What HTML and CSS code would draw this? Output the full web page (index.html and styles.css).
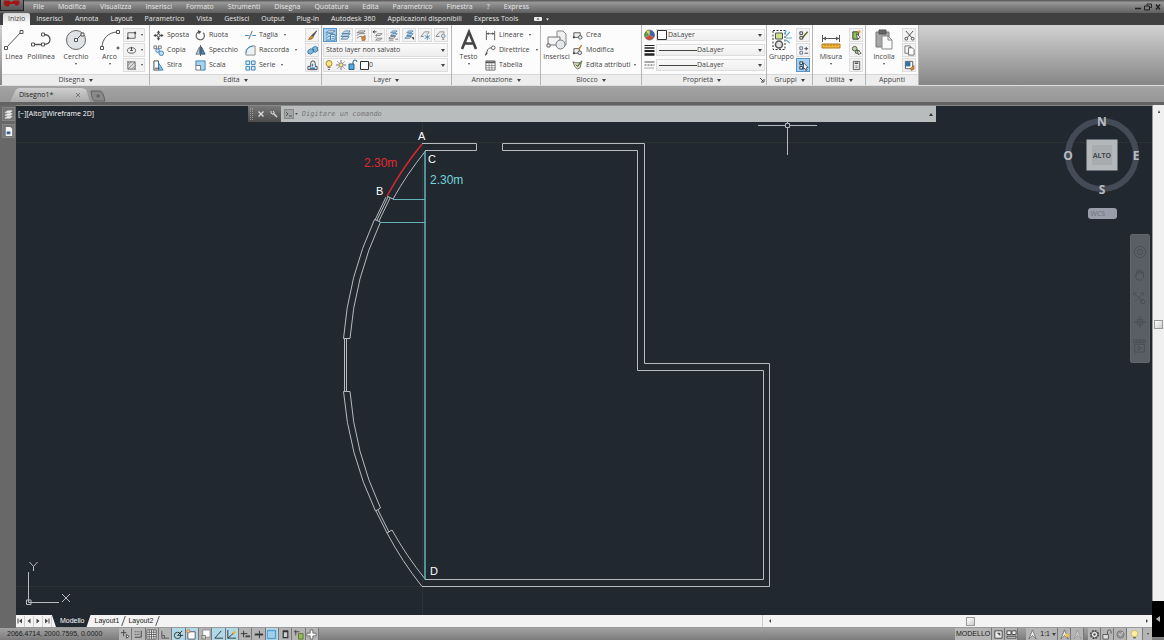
FILE: index.html
```
<!DOCTYPE html>
<html lang="it">
<head>
    <meta charset="UTF-8">
    <meta name="viewport" content="width=device-width, initial-scale=1.0">
    <title>Disegno1</title>
    <link rel="stylesheet" href="styles.css">
</head>
<body>

<header class="top">
    <button class="app-button" aria-label="Menu applicazione">
        <svg viewBox="0 0 24 10"><path d="M3 0h6l2 2 3-2h6v4q-1 2-4 2l-1-2h-5l-2 3q-4 0-5-3z" fill="#a01515"/></svg>
    </button>
    <nav class="menu-bar">
        <a href="#">File</a>
        <a href="#">Modifica</a>
        <a href="#">Visualizza</a>
        <a href="#">Inserisci</a>
        <a href="#">Formato</a>
        <a href="#">Strumenti</a>
        <a href="#">Disegna</a>
        <a href="#">Quotatura</a>
        <a href="#">Edita</a>
        <a href="#">Parametrico</a>
        <a href="#">Finestra</a>
        <a href="#">?</a>
        <a href="#">Express</a>
        <div class="window-buttons">
            <button aria-label="Riduci"><svg viewBox="0 0 8 8"><path d="M1 5.500h6" stroke="#222" stroke-width="1.500"/></svg></button>
            <button aria-label="Ripristina"><svg viewBox="0 0 8 8"><path d="M3 3V1h4.500v3.500H6M.5 3h5v4h-5z" fill="none" stroke="#222"/></svg></button>
            <button aria-label="Chiudi"><svg viewBox="0 0 8 8"><path d="M2 1.500l4 5M6 1.500l-4 5" stroke="#222" stroke-width="1.500"/></svg></button>
        </div>
    </nav>
    <nav class="ribbon-tabs">
        <a href="#" class="active">Inizio</a>
        <a href="#">Inserisci</a>
        <a href="#">Annota</a>
        <a href="#">Layout</a>
        <a href="#">Parametrico</a>
        <a href="#">Vista</a>
        <a href="#">Gestisci</a>
        <a href="#">Output</a>
        <a href="#">Plug-in</a>
        <a href="#">Autodesk 360</a>
        <a href="#">Applicazioni disponibili</a>
        <a href="#">Express Tools</a>
        <button class="ribbon-toggle" aria-label="Riduci barra">
            <svg viewBox="0 0 16 6"><rect x="0" y="1" width="8" height="4" rx="1" fill="#eee"/><path d="M2.500 3.500l1.500-1.500 1.500 1.500z" fill="#333"/><path d="M12 2.500h3l-1.500 2z" fill="#eee"/></svg>
        </button>
    </nav>
</header>

<section class="ribbon">
    <div class="panel">
        <div class="panel-body draw">
            <button class="big"><svg viewBox="0 0 24 24"><path d="M4 20L19 4" stroke="#555"/><path d="M2.500 18.500h3v3h-3zM18 2.500h3v3h-3z" fill="#fff" stroke="#555"/></svg><span>Linea</span></button>
            <button class="big"><svg viewBox="0 0 24 24"><path d="M4 16.500h10M14 6.500q7 0 7 5t-7 5" fill="none" stroke="#555" stroke-width="1.300"/><path d="M2.500 15h3v3h-3zM12.500 15h3v3h-3zM12.500 5h3v3h-3z" fill="#fff" stroke="#555"/></svg><span>Polilinea</span></button>
            <button class="big"><svg viewBox="0 0 24 24"><circle cx="12" cy="12" r="9.500" fill="#dfe3e6" stroke="#666"/><path d="M12 12l6-6" stroke="#555"/><path d="M10.500 10.500h3v3h-3zM17 5h3v3h-3z" fill="#fff" stroke="#555"/></svg><span>Cerchio</span><i class="caret small"></i></button>
            <button class="big"><svg viewBox="0 0 24 24"><path d="M4 20C4 11 10 4 20 4" fill="none" stroke="#555"/><path d="M2.500 18.500h3v3h-3zM18.500 2.500h3v3h-3z" fill="#fff" stroke="#555"/><path d="M18.500 20h3M20 18.500v3" stroke="#333"/></svg><span>Arco</span><i class="caret small"></i></button>
            <div class="stack">
                <button class="mini split" aria-label="Rettangolo"><svg viewBox="0 0 12 12"><path d="M2 3h8v6H2z" fill="#eee" stroke="#555"/><path d="M1 8h2v2H1zM9 2h2v2H9z" fill="#444"/></svg><i class="caret small"></i></button>
                <button class="mini split" aria-label="Ellisse"><svg viewBox="0 0 12 12"><ellipse cx="6" cy="6" rx="4.500" ry="3" fill="#eee" stroke="#555"/><path d="M4.500 6h3M6 2v4" stroke="#444"/></svg><i class="caret small"></i></button>
                <button class="mini split" aria-label="Tratteggio"><svg viewBox="0 0 12 12"><path d="M2 2h8v8H2z" fill="#ddd" stroke="#666"/><path d="M2 6l4-4M2 10l8-8M6 10l4-4M1 1l2 2M9 9l2 2" stroke="#777" stroke-width=".8"/></svg><i class="caret small"></i></button>
            </div>
        </div>
        <div class="panel-title">Disegna <i class="caret"></i></div>
    </div>

    <div class="panel">
        <div class="panel-body edit">
            <div class="stack">
                <button class="item"><svg viewBox="0 0 12 12"><path d="M6 1v10M1 6h10" stroke="#444"/><path d="M4 3l2-2.500L8 3zM4 9l2 2.500L8 9zM3 4L.5 6 3 8zM9 4l2.500 2L9 8z" fill="#444"/><path d="M4.500 4.500h3v3h-3z" fill="#fff" stroke="#555"/></svg>Sposta</button>
                <button class="item"><svg viewBox="0 0 12 12"><path d="M1 1h3v3H1zM6 1h3v3H6z" fill="#eee" stroke="#777"/><circle cx="5" cy="6" r="2" fill="#cde" stroke="#357fb5"/><circle cx="9" cy="9" r="2.500" fill="#bfe0f5" stroke="#357fb5"/></svg>Copia</button>
                <button class="item"><svg viewBox="0 0 12 12"><path d="M1 1h5v10H1z" fill="#fff" stroke="#444"/><path d="M6 3l5 8H6z" fill="#8fc4ea" stroke="#357fb5"/><path d="M2 9h5" stroke="#444"/></svg>Stira</button>
            </div>
            <div class="stack">
                <button class="item"><svg viewBox="0 0 12 12"><path d="M4 2a4.500 4.500 0 1 0 5 1" fill="none" stroke="#666" stroke-width="1.300"/><path d="M3 0l4 2-3 2.500z" fill="#444"/></svg>Ruota</button>
                <button class="item"><svg viewBox="0 0 12 12"><path d="M5 2v8H1z" fill="#b7c3cc" stroke="#678"/><path d="M7 2v8h4z" fill="#3f8fc9" stroke="#357"/><path d="M6 0v12" stroke="#555"/></svg>Specchio</button>
                <button class="item"><svg viewBox="0 0 12 12"><path d="M1 1h10v10H6V6H1z" fill="#a8d3f0" stroke="#357fb5"/><path d="M1 6h5v5H1z" fill="#fff" stroke="#777"/></svg>Scala</button>
            </div>
            <div class="stack">
                <button class="item"><svg viewBox="0 0 12 12"><path d="M0 6h4M8 6h4" stroke="#357fb5"/><path d="M4 10l4-9" stroke="#567"/><path d="M4 6h4" stroke="#999" stroke-dasharray="1 1"/></svg>Taglia <i class="caret small"></i></button>
                <button class="item"><svg viewBox="0 0 12 12"><path d="M1 11V9q0-7 8-8h2v10z" fill="#eef1f3" stroke="#888"/><path d="M1 9q0-7 8-8" fill="none" stroke="#357fb5"/></svg>Raccorda <i class="caret small"></i></button>
                <button class="item"><svg viewBox="0 0 12 12"><path d="M1 1h4v4H1zM7 1h4v4H7zM1 7h4v4H1zM7 7h4v4H7z" fill="#d8ecfa" stroke="#357fb5"/></svg>Serie <i class="caret small"></i></button>
            </div>
            <div class="stack">
                <button class="mini" aria-label="Cancella"><svg viewBox="0 0 12 12"><path d="M10.500 1L5 6l1.500 1.500z" fill="#555" stroke="#555"/><path d="M5 6l2 2-2 2-3.500.500L3 8z" fill="#c98b35" stroke="#a05a20" stroke-width=".6"/></svg></button>
                <button class="mini" aria-label="Esplodi"><svg viewBox="0 0 12 12"><path d="M1 6l3-2 3 1v3l-3 2-3-1zM6 3l3-1.500 2.500 1v4L9 8l-2-1z" fill="#7db7de" stroke="#25668f" stroke-width=".8"/></svg></button>
                <button class="mini" aria-label="Offset"><svg viewBox="0 0 12 12"><path d="M1 10.500V7h3V4q0-3 2.500-3T9 4v3h2v3.500z" fill="#eef5fa" stroke="#444"/><path d="M3 9h6M6 4v3" stroke="#357fb5" stroke-width="1.500"/></svg></button>
            </div>
        </div>
        <div class="panel-title">Edita <i class="caret"></i></div>
    </div>

    <div class="panel">
        <div class="panel-body layer">
            <div class="layer-tools">
                <button class="mini on" aria-label="Proprietà layer"><svg viewBox="0 0 12 12"><path d="M1 3l3-2h7L8 3zM1 6l3-2h5M1 9l3-2h3M1 11h4" fill="#fff" stroke="#3b6f96" stroke-width=".8"/><path d="M6 5h5v6H6z" fill="#fff" stroke="#357fb5"/><path d="M7 7h3M7 9h3" stroke="#357fb5"/></svg></button>
                <button class="mini" aria-label="Rendi corrente"><svg viewBox="0 0 12 12"><path d="M1 10l3-3h6L8 10zM1 7l3-3h7L8 7zM2 4l3-3h6L9 4z" fill="#bfe0f5" stroke="#46718f" stroke-width=".8"/></svg></button>
                <button class="mini" aria-label="Associa"><svg viewBox="0 0 12 12"><path d="M1 3l3-2h6L8 3zM1 6l3-2h6M1 9l3-2h3" fill="#eee" stroke="#666" stroke-width=".8"/><path d="M6 8l4-2v5l-3 1z" fill="#d38a3a" stroke="#8a4f1a" stroke-width=".6"/></svg></button>
                <button class="mini" aria-label="Precedente"><svg viewBox="0 0 12 12"><path d="M1 2h4M3 .5L1 2l2 1.500" fill="none" stroke="#444"/><path d="M4 6l2-2h5L9 6zM4 8.500l1-1.500M4 11l2-2h5L9 11z" fill="#eee" stroke="#666" stroke-width=".8"/></svg></button>
                <button class="mini" aria-label="Isola"><svg viewBox="0 0 12 12"><path d="M3 3l2-2h5L8 3zM3 6l2-2h5L8 6z" fill="#bfe0f5" stroke="#3b6f96" stroke-width=".8"/><path d="M1 9l2-2h5L6 9zM1 11h5M8 10h3" stroke="#555" stroke-width=".8" fill="#eee"/></svg></button>
                <button class="mini" aria-label="Annulla isola"><svg viewBox="0 0 12 12"><path d="M3 3l2-2h5L8 3zM3 6l2-2h5L8 6zM1 9l2-2h5L6 9z" fill="#bfe0f5" stroke="#3b6f96" stroke-width=".8"/><path d="M8 8l3 3V8z" fill="#333"/></svg></button>
                <button class="mini" aria-label="Congela"><svg viewBox="0 0 12 12"><path d="M1 7l4-5h5L9 4" fill="#eee" stroke="#777" stroke-width=".8"/><path d="M1 7h3" stroke="#777"/><path d="M8 4v7M5 6l6 3.500M11 6L5 9.500" stroke="#357fb5" stroke-width=".8"/></svg></button>
                <button class="mini" aria-label="Disattiva"><svg viewBox="0 0 12 12"><path d="M1 7l4-5h5L9 4" fill="#eee" stroke="#777" stroke-width=".8"/><path d="M1 7h4" stroke="#777"/><circle cx="9" cy="6.500" r="2" fill="#d5e5f0" stroke="#678" stroke-width=".8"/><path d="M8 10h2" stroke="#555"/></svg></button>
            </div>
            <div class="combo">
                <select aria-label="Stato layer"><option>Stato layer non salvato</option></select><i class="caret"></i>
            </div>
            <div class="combo">
                <svg class="layer-state" viewBox="0 0 46 12">
                    <circle cx="6" cy="4.500" r="3" fill="#fbe58b" stroke="#a58a2c"/><path d="M4.500 8.500h3M5 10.500h2" stroke="#777"/>
                    <circle cx="18" cy="6" r="2.200" fill="#fbe58b" stroke="#777"/><path d="M18 1v2M18 9v2M13 6h2M21 6h2M14.500 2.500l1 1M20.500 8.500l1 1M21.500 2.500l-1 1M15.500 8.500l-1 1" stroke="#777"/>
                    <path d="M26 5h5v5.500h-5z" fill="#5aa9dc" stroke="#25668f"/><path d="M30 5V3q0-2 2-2t2 2" fill="none" stroke="#25668f"/>
                    <path d="M37.500 2.500h8v8h-8z" fill="#fff" stroke="#333"/>
                </svg>
                <select aria-label="Layer corrente"><option>0</option></select><i class="caret"></i>
            </div>
        </div>
        <div class="panel-title">Layer <i class="caret"></i></div>
    </div>

    <div class="panel">
        <div class="panel-body annotation">
            <button class="big"><svg viewBox="0 0 24 24"><path d="M5 21L12 4l7 17M7.500 15.500h9" fill="none" stroke="#444" stroke-width="2.600"/></svg><span>Testo</span><i class="caret small"></i></button>
            <div class="stack">
                <button class="item"><svg viewBox="0 0 12 12"><path d="M1.500 1v10M10.500 1v10M2 4h8" stroke="#555"/><path d="M2 4l2-1.500v3zM10 4L8 2.500v3z" fill="#555"/></svg>Lineare <i class="caret small"></i></button>
                <button class="item"><svg viewBox="0 0 12 12"><path d="M1 11l2-6q1-2 4-2" fill="none" stroke="#555"/><circle cx="9" cy="3" r="2" fill="#fff" stroke="#555"/><path d="M0 12l1-4 2 1z" fill="#444"/></svg>Direttrice <i class="caret small"></i></button>
                <button class="item"><svg viewBox="0 0 12 12"><path d="M1 1h10v10H1z" fill="#fff" stroke="#666"/><path d="M1 2.500h10" stroke="#555" stroke-width="2"/><path d="M1 6h10M1 8.500h10M4.500 2v9M7.500 2v9" stroke="#777" stroke-width=".8"/></svg>Tabella</button>
            </div>
        </div>
        <div class="panel-title">Annotazione <i class="caret"></i></div>
    </div>

    <div class="panel">
        <div class="panel-body block">
            <button class="big"><svg viewBox="0 0 24 24"><path d="M12 3h6l3 3v11h-9z" fill="#f0f0f0" stroke="#888"/><path d="M3 9h12v8H3z" fill="#f3f3f3" stroke="#777"/><circle cx="15.500" cy="16.500" r="4.500" fill="#e4e8ec" stroke="#777"/><path d="M2 16h3v3H2z" fill="#fff" stroke="#666"/></svg><span>Inserisci</span></button>
            <div class="stack">
                <button class="item"><svg viewBox="0 0 12 12"><path d="M2 3h7v5H2z" fill="#eee" stroke="#555"/><circle cx="9" cy="8" r="2" fill="#dde6ee" stroke="#555"/><path d="M1 7h2v2H1z" fill="#444"/></svg>Crea</button>
                <button class="item"><svg viewBox="0 0 12 12"><path d="M2 4h6v5H2z" fill="#eee" stroke="#555"/><circle cx="8.500" cy="8.500" r="2" fill="#dde6ee" stroke="#555"/><path d="M10.500 0L7 4l1 1z" fill="#e0a030" stroke="#c07a20"/><path d="M1 8h2v2H1z" fill="#444"/></svg>Modifica</button>
                <button class="item"><svg viewBox="0 0 12 12"><path d="M1 2l3 1h6l-1 5-3 2-3-3z" fill="#e8e0c0" stroke="#666"/><path d="M11 1L6 7" stroke="#4c7d3c" stroke-width="1.500"/><path d="M4 5l2 2" stroke="#444"/></svg>Edita attributi <i class="caret small"></i></button>
            </div>
        </div>
        <div class="panel-title">Blocco <i class="caret"></i></div>
    </div>

    <div class="panel">
        <div class="panel-body properties">
            <div class="property">
                <svg viewBox="0 0 12 12"><path d="M6 6V1a5 5 0 0 1 4.300 7.500z" fill="#3d62b5"/><path d="M6 6l4.300 2.500a5 5 0 0 1-8.600 0z" fill="#d04a38"/><path d="M6 6L1.700 8.500A5 5 0 0 1 6 1z" fill="#5da045"/><path d="M6 6L2.500 2.500A5 5 0 0 1 6 1z" fill="#e7d44a"/><circle cx="6" cy="6" r="5" fill="none" stroke="#555" stroke-width=".6"/></svg>
                <div class="combo"><svg class="swatch" viewBox="0 0 10 10"><path d="M.5.5h9v9h-9z" fill="#fff" stroke="#333"/></svg><select aria-label="Colore"><option>DaLayer</option></select><i class="caret"></i></div>
            </div>
            <div class="property">
                <svg viewBox="0 0 12 12"><path d="M1 1.500h10" stroke="#222"/><path d="M1 4h10" stroke="#222" stroke-width="1.500"/><path d="M1 7h10" stroke="#222" stroke-width="2"/><path d="M1 10.500h10" stroke="#222" stroke-width="2.500"/></svg>
                <div class="combo"><span class="line"></span><select aria-label="Spessore linea"><option>DaLayer</option></select><i class="caret"></i></div>
            </div>
            <div class="property">
                <svg viewBox="0 0 12 12"><path d="M1 3h10" stroke="#555"/><path d="M1 6h10" stroke="#555" stroke-dasharray="2 1"/><path d="M1 9h10" stroke="#555" stroke-dasharray="1 1"/></svg>
                <div class="combo"><span class="line"></span><select aria-label="Tipo di linea"><option>DaLayer</option></select><i class="caret"></i></div>
            </div>
        </div>
        <div class="panel-title with-launcher">Proprietà <i class="caret"></i><svg class="launcher" viewBox="0 0 6 6"><path d="M1 1l3 3M5 2v3H2" fill="none" stroke="#444"/></svg></div>
    </div>

    <div class="panel">
        <div class="panel-body group">
            <button class="big"><svg viewBox="0 0 24 24"><path d="M3 2.500h12v19H3z" fill="none" stroke="#333" stroke-dasharray="2 1.500"/><path d="M5.500 5h7v6h-7z" fill="#cfe38c" stroke="#555"/><circle cx="9" cy="16.500" r="3.500" fill="#dfe3e6" stroke="#555" stroke-width="1.500"/><path d="M16 8l4-4M16 10h6M16 12l4 3M15 6l1-4" stroke="#5aa9dc" stroke-width="1.200"/></svg><span>Gruppo</span></button>
            <div class="stack">
                <button class="mini" aria-label="Separa"><svg viewBox="0 0 12 12"><path d="M2 2h3v3H2zM2 7h3v3H2z" fill="#ddd" stroke="#444"/><path d="M10.500 2L6 7l-1 2" stroke="#586b22" stroke-width="1.500"/></svg></button>
                <button class="mini" aria-label="Modifica gruppo"><svg viewBox="0 0 12 12"><path d="M2 2h3v3H2zM2 7h3v3H2z" fill="#d8ecfa" stroke="#678"/><path d="M7 4h4M9 2v4M7 9h4" stroke="#444"/></svg></button>
                <button class="mini on" aria-label="Selezione gruppo"><svg viewBox="0 0 12 12"><path d="M2 2h3v3H2zM2 7h3v3H2z" fill="#d8ecfa" stroke="#234"/><path d="M6 3l5 5-2 .5 1 2.500-1.500.5-1-2.500L6 10z" fill="#fff" stroke="#234" stroke-width=".8"/></svg></button>
            </div>
        </div>
        <div class="panel-title">Gruppi <i class="caret"></i></div>
    </div>

    <div class="panel">
        <div class="panel-body utility">
            <button class="big"><svg viewBox="0 0 24 24"><path d="M3.500 7v7M20.500 7v7M4 10.500h16" stroke="#555"/><path d="M4 10.500l3-2v4zM20 10.500l-3-2v4z" fill="#555"/><path d="M3 16h18v4H3z" fill="#edb63f" stroke="#b07d1c"/><path d="M6 16v2M9 16v2M12 16v2M15 16v2M18 16v2" stroke="#b07d1c"/></svg><span>Misura</span><i class="caret small"></i></button>
            <div class="stack">
                <button class="mini" aria-label="Selezione rapida"><svg viewBox="0 0 12 12"><path d="M2 2h6v8H2z" fill="#8fc75a" stroke="#333"/><path d="M6 4l4 4-3 2z" fill="#fff" stroke="#333" stroke-width=".8"/><path d="M9 0v4M7 2h4" stroke="#e0a030"/></svg></button>
                <button class="mini" aria-label="Seleziona tutto"><svg viewBox="0 0 12 12"><circle cx="4" cy="4" r="2.500" fill="#b5d898" stroke="#555"/><path d="M5 6h4v3H5z" fill="#b5d898" stroke="#555"/><path d="M7 5l4 4-3 1.500z" fill="#fff" stroke="#333" stroke-width=".8"/></svg></button>
                <button class="mini" aria-label="Calcolatrice"><svg viewBox="0 0 12 12"><path d="M2.500 1.500h7v9h-7z" fill="#eee" stroke="#555"/><path d="M4 3.500h4" stroke="#444" stroke-width="1.500"/><path d="M4 6.500h4M4 8.500h4" stroke="#777" stroke-dasharray="1 .5"/></svg></button>
            </div>
        </div>
        <div class="panel-title">Utilità <i class="caret"></i></div>
    </div>

    <div class="panel">
        <div class="panel-body clipboard">
            <button class="big"><svg viewBox="0 0 24 24"><path d="M4 4h13v15H4z" fill="#a7a7a7" stroke="#777"/><path d="M7 2h7v4H7z" fill="#666" stroke="#555"/><path d="M10 8h6l4 4v9H10z" fill="#fafafa" stroke="#888"/><path d="M16 8v4h4" fill="none" stroke="#888"/></svg><span>Incolla</span><i class="caret small"></i></button>
            <div class="stack">
                <button class="mini" aria-label="Taglia"><svg viewBox="0 0 12 12"><path d="M2 1l7 8M10 1L3 9" stroke="#444"/><circle cx="2.500" cy="9.500" r="1.500" fill="#fff" stroke="#444"/><circle cx="9.500" cy="9.500" r="1.500" fill="#fff" stroke="#444"/></svg></button>
                <button class="mini" aria-label="Copia negli appunti"><svg viewBox="0 0 12 12"><path d="M1 1h6v8H1z" fill="#f5f5f5" stroke="#777"/><path d="M5 3h4l2 2v6H5z" fill="#fff" stroke="#666"/></svg></button>
                <button class="mini" aria-label="Corrispondenza proprietà"><svg viewBox="0 0 12 12"><path d="M1.500 1.500h8v8h-8z" fill="#fff" stroke="#555"/><path d="M2 2h5v5H2z" fill="#3274a8"/><path d="M7 9l4-3v4l-3 1.500z" fill="#d38a3a" stroke="#8a4f1a" stroke-width=".6"/></svg></button>
            </div>
        </div>
        <div class="panel-title">Appunti</div>
    </div>
</section>

<nav class="doc-tabs">
    <div class="doc-tab"><a href="#">Disegno1*</a><button aria-label="Chiudi disegno"><svg viewBox="0 0 6 6"><path d="M1 1l4 4M5 1L1 5" stroke="#777"/></svg></button></div>
    <button class="new-tab" aria-label="Nuovo disegno"><svg viewBox="0 0 16 12"><path d="M1 1h9q3 0 5 10H5Q2 11 1 1z" fill="#898989" stroke="#606060"/><path d="M6 6h4M8 4v4" stroke="#5c5c5c"/></svg></button>
</nav>

<main class="workspace">
    <aside class="side-bar">
        <button aria-label="Layer"><svg viewBox="0 0 12 12"><path d="M2 4l3-2h5L8 4zM2 7l3-2h5L8 7zM2 10l3-2h5l-2 2z" fill="#eee" stroke="#ddd" stroke-width=".8"/></svg></button>
        <button aria-label="Proprietà"><svg viewBox="0 0 12 12"><path d="M3 1h5l2 2v8H3z" fill="#f4f4f4"/><path d="M4 6h4v3H4z" fill="#3b5f94"/></svg></button>
    </aside>

    <section class="viewport">
        <!-- Pianta dell'edificio in coordinate finestra -->
        <svg class="drawing" viewBox="16 106 1136 509">
            <g class="guides">
                <path d="M16 142.500H1152M422.500 106V615M16 586.500H422"/>
            </g>
            <g class="walls">
                <path d="M422 143.500H476.500V150.500H425M502.500 143.500H644.500V363.500H769.500V586.500H422"/>
                <path d="M502.500 143.500V150.500H637.500V370.500H763.500V579.500H425"/>
                <path d="M387 196L393 199A338.500 338.500 0 0 1 425.500 151"/>
                <path d="M388 197L377 220M390 198L379 221M386 197L375 220"/>
                <path d="M374.500 219.500L380.500 222A338.500 338.500 0 0 0 350 338.500H343.500A345 345 0 0 1 374.500 219.500"/>
                <path d="M343.500 391.500H350A338.500 338.500 0 0 0 380.500 508L375.500 511A345 345 0 0 1 343.500 391.500"/>
                <path d="M344.500 338.500V391.500M346.500 338.500V391.500"/>
                <path d="M376 511L387 533M378 510L389 532"/>
                <path d="M425.500 579.500A338.500 338.500 0 0 1 392 530L387 533A345 345 0 0 0 422 586.500"/>
            </g>
            <path class="red-line" d="M422 144A345 345 0 0 0 387 196"/>
            <g class="cyan-line">
                <path d="M425 151V579.500" stroke-width="1.500"/>
                <path d="M393 199.500H425M380 222.500H425"/>
            </g>
            <g class="points">
                <text x="418" y="140">A</text>
                <text x="376" y="195">B</text>
                <text x="428" y="163">C</text>
                <text x="430" y="575">D</text>
            </g>
            <text class="red" x="364" y="167">2.30m</text>
            <text class="cyan" x="430" y="184">2.30m</text>
            <path class="cursor" d="M758 125.500H786M790 125.500H817M787.500 106V123M787.500 127V155M785.500 123.500h4v4h-4z"/>
            <g class="ucs">
                <path d="M28.500 572V602.500H59M26.500 600h4.500v4.500h-4.500zM29.500 562l4 4.500 4-4.500M33.500 566.500V571M62 594l8 8M70 594l-8 8"/>
            </g>
        </svg>

        <p class="view-label">[−][Alto][Wireframe 2D]</p>

        <div class="command-line">
            <span class="grip"></span>
            <button aria-label="Chiudi"><svg viewBox="0 0 8 8"><path d="M1.500 1.500l5 5M6.500 1.500l-5 5" stroke="#ddd" stroke-width="1.300"/></svg></button>
            <button aria-label="Personalizza"><svg viewBox="0 0 8 8"><path d="M3 3l4 4" stroke="#ddd" stroke-width="1.500"/><path d="M1 1v2l1.500 1.200L4.300 2.500 3 1" fill="none" stroke="#ddd"/></svg></button>
            <div class="command-field">
                <svg viewBox="0 0 14 10"><rect x=".5" y=".5" width="9" height="9" fill="#a0a4a7" stroke="#888"/><path d="M2 3l2 2-2 2M5 7h3" fill="none" stroke="#555"/><path d="M11 4h3l-1.500 2z" fill="#555"/></svg>
                <input type="text" aria-label="Comando" placeholder="Digitare un comando">
                <i class="caret up"></i>
            </div>
        </div>

        <div class="view-cube">
            <svg viewBox="0 0 80 84">
                <circle cx="40" cy="42" r="34" fill="none" stroke="#454b56" stroke-width="6"/>
                <path d="M24.500 26.500h31v31h-31z" fill="#b4b8bb"/>
                <path d="M30 32h20v20H30z" fill="#a8acaf"/>
                <text x="40" y="13">N</text>
                <text x="74" y="47">E</text>
                <text x="40" y="81">S</text>
                <text x="6" y="47">O</text>
                <text class="face" x="40" y="45">ALTO</text>
            </svg>
            <button class="wcs">WCS</button>
        </div>

        <div class="nav-bar">
            <button aria-label="Navigazione"><svg viewBox="0 0 16 16"><circle cx="8" cy="8" r="6.500"/><circle cx="8" cy="8" r="3"/></svg></button>
            <button aria-label="Pan"><svg viewBox="0 0 16 16"><path d="M4 13l-2-5 2 1V4l2 3V2l2 4 1-4 1 5 2-3v7l-3 3z"/></svg></button>
            <button aria-label="Zoom"><svg viewBox="0 0 16 16"><path d="M2 2l9 9M11 2l-9 9M1 4V1h3M9 1h3v3"/><circle cx="11" cy="11" r="2.500"/></svg></button>
            <button aria-label="Orbita"><svg viewBox="0 0 16 16"><path d="M8 1v14M1 8h14M5 5h6v6H5z"/></svg></button>
            <button aria-label="ShowMotion"><svg viewBox="0 0 16 16"><path d="M1 1h3v3H1zM6 1h3v3H6zM11 1h3v3h-3zM2 6h11v9H2zM6 8l4 2.500L6 13z"/></svg></button>
        </div>
    </section>

    <div class="scroll-v"><i class="caret up small"></i><span class="thumb"></span></div>

    <div class="layout-bar">
        <div class="layout-arrows">
            <button aria-label="Primo"><svg viewBox="0 0 8 8"><path d="M2 1.500v5" stroke="#444"/><path d="M6 1.500v5L3 4z" fill="#444"/></svg></button>
            <button aria-label="Precedente"><svg viewBox="0 0 8 8"><path d="M5.500 1.500v5L2.500 4z" fill="#444"/></svg></button>
            <button aria-label="Successivo"><svg viewBox="0 0 8 8"><path d="M2.500 1.500v5L5.500 4z" fill="#444"/></svg></button>
            <button aria-label="Ultimo"><svg viewBox="0 0 8 8"><path d="M6 1.500v5" stroke="#444"/><path d="M2 1.500v5L5 4z" fill="#444"/></svg></button>
        </div>
        <a href="#" class="layout-tab active">Modello</a>
        <a href="#" class="layout-tab">Layout1</a>
        <a href="#" class="layout-tab">Layout2</a>
        <div class="scroll-h">
            <svg viewBox="0 0 6 6"><path d="M4 1v4L2 3z" fill="#444"/></svg>
            <span class="thumb"></span>
            <svg viewBox="0 0 6 6"><path d="M2 1v4l2-2z" fill="#444"/></svg>
        </div>
    </div>
    <button class="drawer" aria-label="Apri pannello"><svg viewBox="0 0 6 8"><path d="M5 1v6L1 4z" fill="#bbb"/></svg></button>
</main>

<footer class="status-bar">
    <span class="coords">2066.4714, 2000.7595, 0.0000</span>
    <div class="toggles">
        <button aria-label="Vincoli"><svg viewBox="0 0 12 12"><path d="M4 1v7M1 4h6M7 6l3 2-3 2z" fill="#fff" stroke="#444"/></svg></button>
        <button aria-label="Snap"><svg viewBox="0 0 12 12"><path d="M9 2v7H2" fill="none" stroke="#444"/><path d="M2 3h5M2 6h5" stroke="#444" stroke-dasharray="1 1"/></svg></button>
        <button aria-label="Griglia"><svg viewBox="0 0 12 12"><path d="M1 1h10v10H1z" fill="#fff"/><path d="M1 1h10v10H1zM1 3.500h10M1 6h10M1 8.500h10M3.500 1v10M6 1v10M8.500 1v10" fill="none" stroke="#444" stroke-width=".8"/></svg></button>
        <button aria-label="Orto"><svg viewBox="0 0 12 12"><path d="M2 2v8h8M2 7h3v3" fill="none" stroke="#555"/></svg></button>
        <button class="on" aria-label="Polare"><svg viewBox="0 0 12 12"><circle cx="5" cy="7" r="3.500" fill="none" stroke="#333"/><path d="M5 7l5-5M5 7h6" stroke="#333"/></svg></button>
        <button class="on" aria-label="Osnap"><svg viewBox="0 0 12 12"><path d="M2 3h8v8H2z" fill="#fff" stroke="#556"/><path d="M1 1h3v3H1z" fill="#f7d080" stroke="#b5734b" stroke-width=".8"/></svg></button>
        <button aria-label="Osnap 3D"><svg viewBox="0 0 12 12"><path d="M3 1h8v8H3z" fill="#fff" stroke="#888"/><path d="M2 7h4v4H2z" fill="#ccc" stroke="#777"/></svg></button>
        <button class="on" aria-label="Puntamento"><svg viewBox="0 0 12 12"><path d="M9 2l-7 8h9" fill="none" stroke="#333"/></svg></button>
        <button class="on" aria-label="UCS dinamico"><svg viewBox="0 0 12 12"><path d="M2 1v9h9M2 10l7-6" fill="none" stroke="#333"/><path d="M9 1l1 2 1.500.5-2 1L9 7 8 4.500 6 4l2-1z" fill="#efb838"/></svg></button>
        <button aria-label="Input dinamico"><svg viewBox="0 0 12 12"><path d="M4 2v7M1 5h7" stroke="#333"/><path d="M6 7h5v2H6z" fill="#444"/></svg></button>
        <button aria-label="Spessore"><svg viewBox="0 0 12 12"><path d="M7 2v8" stroke="#333"/><path d="M2 6h9" stroke="#333" stroke-width="2"/></svg></button>
        <button class="on" aria-label="Trasparenza"><svg viewBox="0 0 12 12"><path d="M1.500 1.500h9v9h-9z" fill="#8dc4ea" stroke="#4a8fc0"/><path d="M2 4h8M2 6h8M2 8h8" stroke="#d3ebfa" stroke-dasharray="1 1"/></svg></button>
        <button aria-label="Proprietà rapide"><svg viewBox="0 0 12 12"><path d="M3.500 3h5v6.500h-5zM3 2h6" fill="#ccc" stroke="#333" stroke-width="1.300"/></svg></button>
        <button aria-label="Ciclo selezione"><svg viewBox="0 0 12 12"><path d="M3 1v6M1 3h6" stroke="#444"/><path d="M6 5h5v6H6z" fill="#93b95b" stroke="#567a2c"/></svg></button>
        <button aria-label="Monitor annotazioni"><svg viewBox="0 0 12 12"><path d="M4.500 1h3v3.500H11v3H7.500V11h-3V7.500H1v-3h3.500z" fill="#fff" stroke="#666"/></svg></button>
    </div>
    <div class="status-right">
        <button class="text">MODELLO</button>
        <button aria-label="Layout"><svg viewBox="0 0 12 12"><path d="M2 2h8v8H2z" fill="#eee" stroke="#444"/><path d="M4 4l4 4V4z" fill="#555"/></svg></button>
        <button aria-label="Viste"><svg viewBox="0 0 12 12"><path d="M1 2h4.500v4H1zM6.500 2H11v4H6.500zM1 8h10v2H1z" fill="#eee" stroke="#444"/></svg></button>
        <span class="gap"></span>
        <button class="text"><svg viewBox="0 0 12 12"><path d="M6 1L2 11l4-4 4 4z" fill="#eee" stroke="#555" stroke-width=".7"/></svg>1:1 <i class="caret"></i></button>
        <button aria-label="Visibilità"><svg viewBox="0 0 12 12"><path d="M6 1L2 11l4-4 4 4z" fill="#eee" stroke="#555" stroke-width=".7"/><circle cx="9" cy="7" r="2" fill="#efc23d"/></svg></button>
        <button aria-label="Scala automatica"><svg viewBox="0 0 12 12"><path d="M6 1L2 11l4-4 4 4z" fill="#c8c8c8" stroke="#909090" stroke-width=".7"/></svg></button>
        <span class="gap thin"></span>
        <button aria-label="Area di lavoro"><svg viewBox="0 0 12 12"><circle cx="6" cy="6" r="4" fill="#eee" stroke="#444" stroke-width="2" stroke-dasharray="2 1.100"/><circle cx="6" cy="6" r="3.500" fill="#eee" stroke="#444"/><circle cx="6" cy="6" r="1.300" fill="#555"/></svg></button>
        <button aria-label="Blocca"><svg viewBox="0 0 12 12"><path d="M1 6h6v5H1z" fill="#ddd" stroke="#555"/><path d="M6 6V3q0-2 2-2t2 2v2" fill="none" stroke="#555"/></svg></button>
        <button aria-label="Hardware"><svg viewBox="0 0 12 12"><circle cx="6" cy="6" r="4" fill="#999" stroke="#777"/><path d="M4 5l2 2 3-4" fill="none" stroke="#ddd"/></svg></button>
        <button class="bulb" aria-label="Isola oggetti"><svg viewBox="0 0 12 12"><circle cx="6" cy="5" r="3.500" fill="#fbf0a0" stroke="#c5b050" stroke-width=".8"/><path d="M4.500 9.500h3" stroke="#666" stroke-width="1.500"/></svg></button>
        <button class="more" aria-label="Menu"><i class="caret small"></i></button>
    </div>
</footer>

</body>
</html>
```
FILE: styles.css
```
* {
    box-sizing: border-box;
}

body {
    margin: 0;
    height: 100vh;
    display: flex;
    flex-direction: column;
    overflow: hidden;
    background: #666;
    color: #444;
    font-family: "Open Sans", "Noto Sans", sans-serif;
    font-size: 7px;
    line-height: 10px;
}

a {
    color: inherit;
    text-decoration: none;
}

button {
    display: flex;
    align-items: center;
    justify-content: center;
    margin: 0;
    padding: 0;
    border: none;
    background: none;
    color: inherit;
    font: inherit;
    white-space: nowrap;
}

svg {
    display: block;
    flex: none;
}

.caret {
    flex: none;
    display: inline-block;
    border: 2px solid transparent;
    border-top: 3px solid #444;
    border-bottom: none;
}

.caret.small {
    border-width: 1px;
    border-top-width: 2px;
}

.caret.up {
    border-top: none;
    border-bottom: 3px solid #333;
}

/* Menu and ribbon tabs */

.top {
    display: grid;
    grid-template-columns: 24px 1fr;
    grid-template-rows: 13px 12px;
    color: #e6e6e6;
    background: #404040;
}

.app-button {
    grid-row: 1;
    grid-column: 1;
    align-self: start;
    height: 11px;
    background: linear-gradient(#777, #555);
    border: 1px solid #222;
    border-top: none;
    z-index: 1;
}

.app-button svg {
    width: 22px;
    height: 10px;
}

.menu-bar,
.ribbon-tabs {
    grid-column: 1 / -1;
    display: flex;
    align-items: center;
}

.menu-bar {
    grid-row: 1;
    gap: 14px;
    padding-left: 33px;
    background: linear-gradient(#606060 0, #606060 1px, #999 2px, #606060);
}

.window-buttons {
    display: flex;
    gap: 2px;
    margin-left: auto;
    padding-right: 2px;
}

.window-buttons svg {
    width: 8px;
    height: 8px;
}

.ribbon-tabs {
    grid-row: 2;
    padding-left: 3px;
    background: #404040;
}

.ribbon-tabs a {
    padding: 1px 6px;
}

.ribbon-tabs a.active {
    padding: 1px 5px;
    border-radius: 2px 2px 0 0;
    background: linear-gradient(#d8d8d8, #fff);
    color: #444;
}

.ribbon-toggle {
    margin-left: 10px;
}

.ribbon-toggle svg {
    width: 16px;
    height: 6px;
}

/* Ribbon */

.ribbon {
    display: flex;
    padding-left: 2px;
    background: linear-gradient(#d2d2d2, #868686);
    border-bottom: 1px solid #ddd;
}

.panel {
    display: flex;
    flex-direction: column;
    background: #fcfcfc;
    border-right: 1px solid #b5b5b5;
}

.panel-body {
    display: grid;
    flex: none;
    align-content: start;
    padding-top: 3px;
    height: 49px;
}

.panel-title {
    display: flex;
    align-items: center;
    justify-content: center;
    gap: 4px;
    height: 11px;
    background: #ededed;
    border-top: 1px solid #d8d8d8;
}

.launcher {
    width: 6px;
    height: 6px;
    margin-left: 34px;
}

.panel-title.with-launcher {
    padding-left: 40px;
}

.draw {
    grid-template-columns: 24px 30px 40px 27px 26px;
}

.edit {
    grid-template-columns: 42px 50px 60px 16px;
    padding-left: 3px;
}

.layer {
    grid-template-rows: repeat(3, 14px);
    gap: 1px;
    width: 129px;
    padding-left: 1px;
    padding-right: 3px;
}

.annotation {
    grid-template-columns: 33px 55px;
}

.block {
    grid-template-columns: 31px 69px;
}

.properties {
    grid-template-rows: repeat(3, 14px);
    gap: 1px;
    width: 124px;
    padding-left: 1px;
    padding-right: 1px;
}

.group {
    grid-template-columns: 29px 16px;
}

.utility,
.clipboard {
    grid-template-columns: 36px 16px;
}

.stack {
    display: grid;
    grid-template-rows: repeat(3, 14px);
    gap: 1px;
}

.big {
    flex-direction: column;
    justify-content: flex-start;
}

.big svg {
    width: 24px;
    height: 24px;
}

.big .caret {
    margin-top: 1px;
}

.item {
    justify-content: flex-start;
    gap: 3px;
}

.item svg,
.mini svg {
    width: 11px;
    height: 11px;
}

.item .caret {
    margin-left: 3px;
}

.block .item .caret {
    margin-left: 0;
}

.mini {
    width: 14px;
    background: #f3f3f3;
    border: 1px solid #ddd;
}

.mini.split {
    gap: 4px;
    width: 22px;
}

.mini.on {
    background: #a9d0f0;
    border-color: #5a94c4;
}

.layer-tools {
    display: flex;
    justify-content: space-between;
}

.combo {
    display: flex;
    align-items: center;
    flex: 1;
    min-width: 0;
    padding: 0 2px;
    background: linear-gradient(#fafafa, #eee);
    border: 1px solid #ddd;
}

.combo select {
    flex: 1;
    min-width: 0;
    padding: 0;
    border: none;
    background: none;
    color: inherit;
    font: inherit;
    appearance: none;
}

.layer-state {
    width: 46px;
    height: 12px;
    margin-left: -3px;
}

.property {
    display: flex;
    align-items: center;
}

.property > svg {
    width: 13px;
    height: 12px;
}

.property .combo {
    padding-left: 0;
}

.swatch {
    width: 10px;
    height: 10px;
    margin-right: 1px;
}

.line {
    width: 38px;
    margin-left: 2px;
    border-top: 1px solid #444;
}

/* Drawing tabs */

.doc-tabs {
    display: flex;
    align-items: flex-end;
    height: 19px;
    padding-left: 10px;
    background: linear-gradient(#a4a4a4, #969696);
    border-bottom: 3px solid #626262;
}

.doc-tab {
    display: flex;
    align-items: center;
    justify-content: space-between;
    width: 80px;
    height: 14px;
    padding: 0 9px;
    background: linear-gradient(#d0d0d0, #a8a8a8);
    clip-path: polygon(0 100%, 6px 10%, 9px 0, 72px 0, 76px 10%, 100% 100%);
    color: #222;
}

.doc-tab svg {
    width: 6px;
    height: 6px;
}

.new-tab svg {
    width: 16px;
    height: 12px;
}

/* Workspace */

.workspace {
    position: relative;
    flex: 1;
    min-height: 0;
    display: grid;
    grid-template-columns: 16px 1fr 12px;
    grid-template-rows: 1fr 13px;
}

.side-bar {
    grid-row: 1 / 3;
    display: flex;
    flex-direction: column;
    align-items: center;
    gap: 3px;
    padding-top: 2px;
    background: #686868;
}

.side-bar button {
    width: 13px;
    height: 14px;
    background: #757575;
    border: 1px solid #858585;
}

.side-bar svg {
    width: 11px;
    height: 11px;
}

.viewport {
    position: relative;
    min-height: 0;
    overflow: hidden;
    background: #212830;
    border-top: 1px solid #888;
}

.drawing {
    width: 100%;
    height: 100%;
    fill: none;
}

.guides {
    stroke: #2a3234;
}

.walls,
.ucs {
    stroke: #b8bcc0;
}

.red-line {
    stroke: #d8282c;
    stroke-width: 1.5px;
}

.cyan-line {
    stroke: #62b3b8;
}

.cursor {
    stroke: #b4b8bb;
}

.drawing text {
    font-family: "Liberation Sans", Arial, sans-serif;
    font-size: 12px;
}

.points text {
    fill: #fff;
    stroke: none;
    font-size: 11px;
}

.drawing .red {
    fill: #e0282c;
}

.drawing .cyan {
    fill: #74d5dc;
}

.view-label {
    position: absolute;
    top: 3px;
    left: 2px;
    margin: 0;
    color: #fff;
}

.command-line {
    position: absolute;
    top: 0;
    left: 20.4%;
    width: 60.6%;
    height: 16px;
    display: flex;
    align-items: center;
    background: linear-gradient(#777, #4c4c4c);
}

.command-line svg {
    width: 8px;
    height: 8px;
}

.command-line button {
    width: 13px;
}

.grip {
    width: 3px;
    height: 12px;
    margin: 0 2px;
    border: 1px dotted #999;
    border-width: 0 1px;
}

.command-field {
    flex: 1;
    align-self: stretch;
    display: flex;
    align-items: center;
    gap: 4px;
    padding: 0 3px;
    background: #b9bcbd;
}

.command-field svg {
    width: 14px;
    height: 10px;
}

.command-field input {
    flex: 1;
    min-width: 0;
    padding: 0;
    border: none;
    outline: none;
    background: none;
    font: italic 7px/10px "DejaVu Sans Mono", monospace;
}

.command-field input::placeholder {
    color: #777;
}

.view-cube {
    position: absolute;
    top: 7px;
    right: 10px;
    display: flex;
    flex-direction: column;
    align-items: center;
    gap: 11px;
}

.view-cube svg {
    width: 80px;
    height: 84px;
    overflow: visible;
}

.view-cube text {
    fill: #b8bcc2;
    font-size: 12px;
    font-weight: bold;
    text-anchor: middle;
}

.view-cube .face {
    fill: #454b52;
    font-size: 7px;
}

.wcs {
    width: 29px;
    height: 11px;
    justify-content: flex-start;
    padding-left: 3px;
    border-radius: 3px;
    background: #9a9eaa;
    color: #6c717c;
}

.nav-bar {
    position: absolute;
    top: 128px;
    right: 2px;
    display: flex;
    flex-direction: column;
    align-items: center;
    justify-content: space-evenly;
    width: 20px;
    height: 129px;
    border: 1px solid #60656b;
    border-radius: 2px;
    background: #5a5f65;
}

.nav-bar svg {
    width: 14px;
    height: 14px;
    fill: none;
    stroke: #484d53;
}

.thumb {
    display: block;
    width: 9px;
    height: 9px;
    border: 1px solid #999;
    background: linear-gradient(135deg, #fff, #ccc);
}

.scroll-v {
    display: flex;
    flex-direction: column;
    align-items: center;
    padding: 5px 0 80px;
    background: #f0f0f0;
    border-left: 1px solid #999;
}

.scroll-v .thumb {
    margin: auto 0;
}

.layout-bar {
    grid-column: 2 / 4;
    display: flex;
    align-items: center;
    background: #f3f3f3;
    border-bottom: 1px solid #999;
    color: #222;
    font-family: "Liberation Sans", Arial, sans-serif;
}

.layout-arrows {
    display: flex;
}

.layout-arrows button {
    width: 9px;
    height: 11px;
    border-right: 1px solid #ccc;
}

.layout-arrows svg {
    width: 8px;
    height: 8px;
}

.layout-tab {
    display: flex;
    padding-left: 4px;
}

.layout-tab::after {
    content: "";
    width: 1px;
    height: 10px;
    margin-left: 4px;
    background: #555;
    transform: skewX(-20deg);
}

.layout-tab.active {
    padding: 1px 6px 1px 8px;
    background: #212830;
    color: #fff;
    clip-path: polygon(0 0, 100% 0, calc(100% - 4px) 100%, 4px 100%);
}

.layout-tab.active::after {
    display: none;
}

.scroll-h {
    display: flex;
    align-items: center;
    justify-content: space-between;
    width: 35%;
    height: 12px;
    margin-left: auto;
    padding: 0 14px 0 4px;
    border-left: 1px solid #ccc;
}

.scroll-h .thumb {
    margin-left: 24px;
}

.scroll-h svg {
    width: 6px;
    height: 6px;
}

.drawer {
    position: absolute;
    right: 0;
    bottom: -9px;
    width: 12px;
    height: 36px;
    background: #000;
}

.drawer svg {
    width: 6px;
    height: 8px;
}

/* Status bar */

.status-bar {
    display: flex;
    align-items: stretch;
    height: 12px;
    padding-right: 12px;
    background: linear-gradient(#a2a2a2, #7c7c7c);
    color: #222;
    font-family: "Liberation Sans", Arial, sans-serif;
}

.coords {
    width: 119px;
    padding: 1px 0 0 7px;
    white-space: nowrap;
}

.toggles {
    display: grid;
    grid-template-columns: repeat(15, 1fr);
    width: 200px;
}

.status-bar button {
    min-width: 13px;
    background: #b4b4b4;
    border-right: 1px solid #777;
}

.status-bar button.on {
    background: #b0d9e8;
}

.status-bar svg {
    width: 11px;
    height: 11px;
}

.status-right {
    display: flex;
    margin-left: auto;
}

.status-right .text {
    gap: 2px;
    padding: 0 1px;
}

.status-bar .bulb {
    width: 16px;
    background: #ccc;
}

.status-bar .more {
    min-width: 9px;
    border-right: none;
}

.gap {
    width: 8px;
}

.gap.thin {
    width: 4px;
}
```
